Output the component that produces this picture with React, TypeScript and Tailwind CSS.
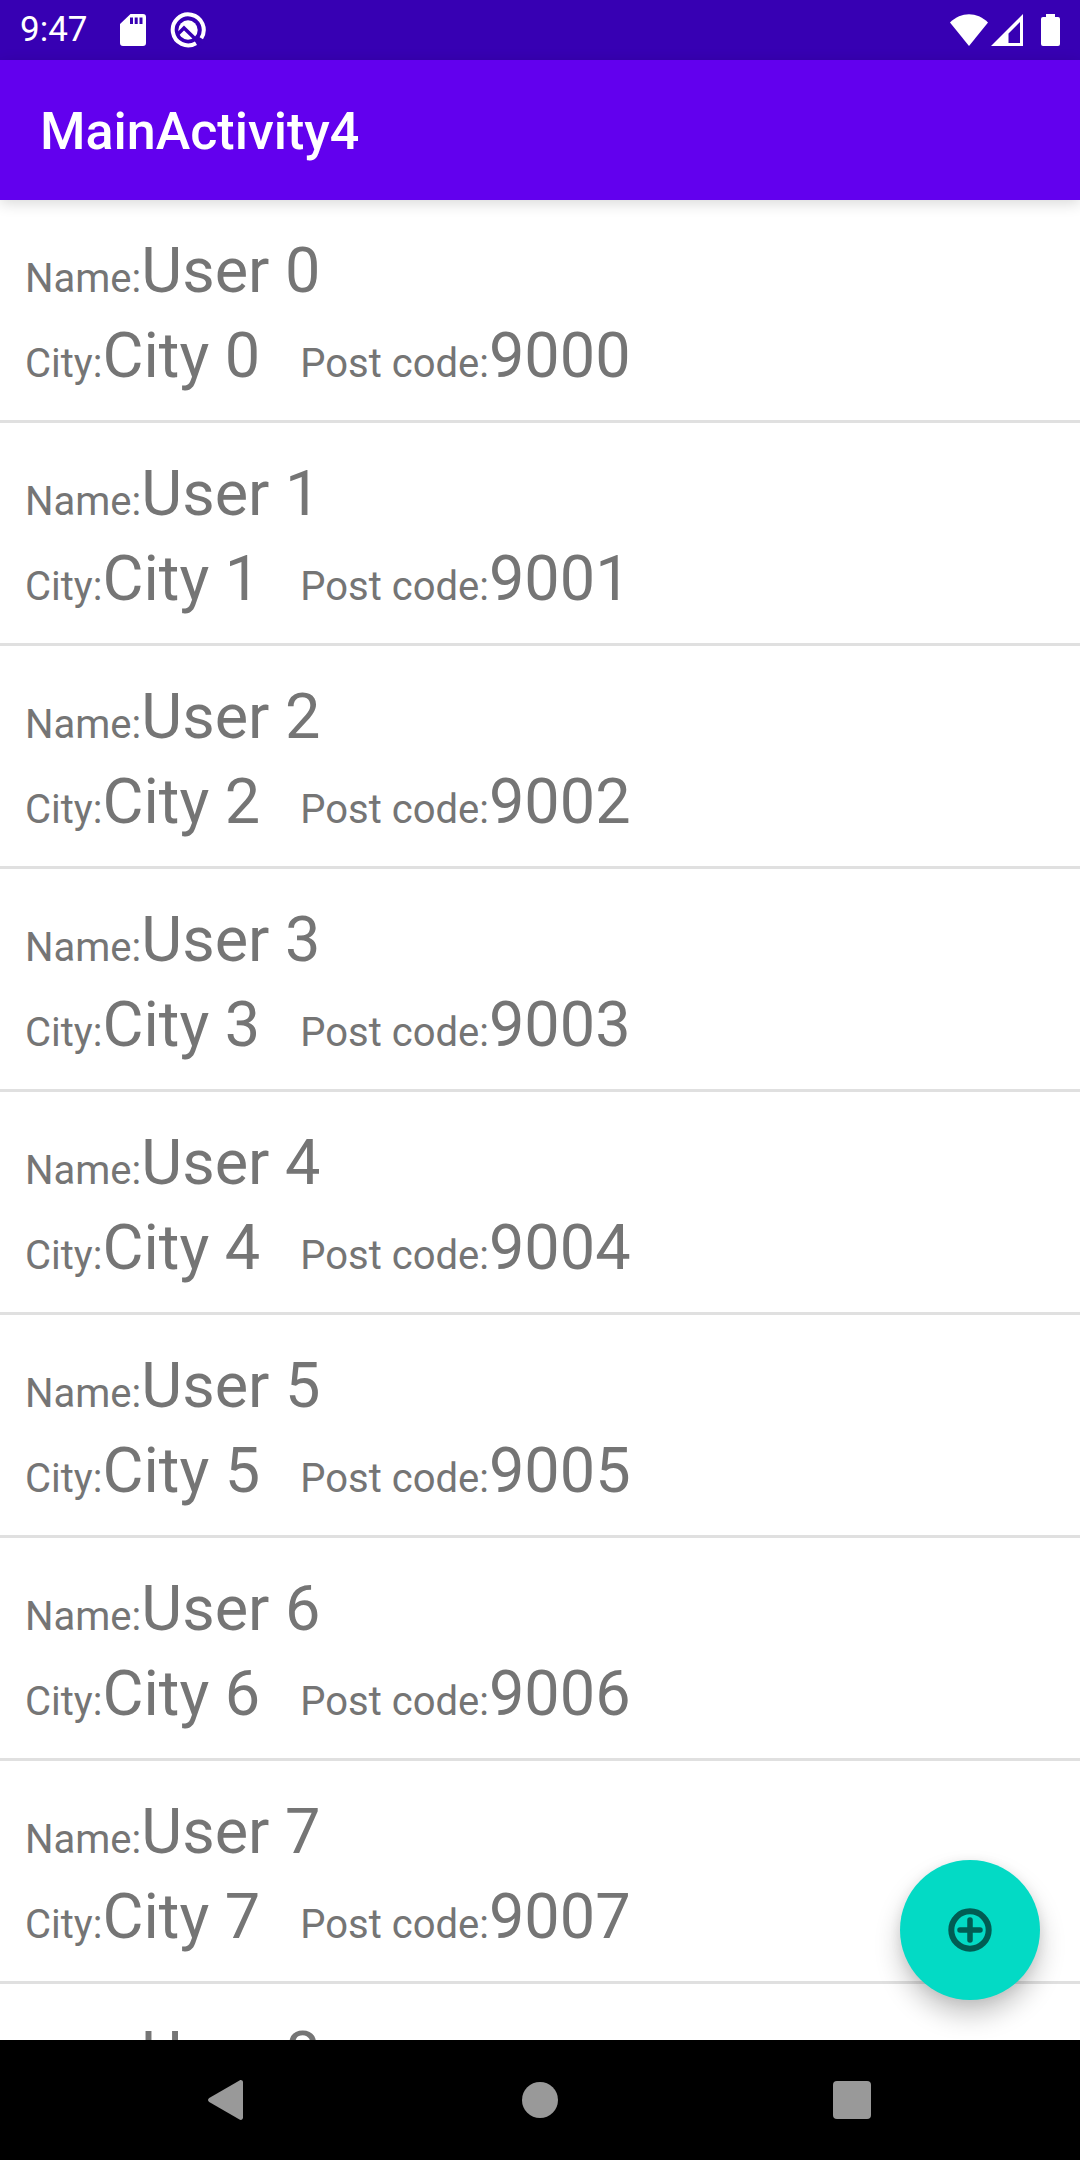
const users = Array.from({ length: 9 }, (_, i) => ({
  name: `User ${i}`,
  city: `City ${i}`,
  postCode: String(9000 + i),
}));

function StatusBar() {
  return (
    <div className="flex h-15 shrink-0 items-center justify-between bg-[#3700b3] pr-5 pl-5 text-white">
      <div className="flex items-center">
        <time className="text-[35px] leading-10">9:47</time>
        <svg className="ml-8 h-8 w-[26px]" viewBox="0 0 26 32" fill="currentColor" aria-label="SD card" role="img">
          <path
            fillRule="evenodd"
            d="M10.500 0H23a3 3 0 0 1 3 3v26a3 3 0 0 1-3 3H3a3 3 0 0 1-3-3V10zM10 3.500v6.500h3v-6.500zM14.700 3.500v6.500h3v-6.500zM19.500 3.500v6.500h3v-6.500z"
          />
        </svg>
        <svg className="ml-6 h-9 w-9" viewBox="0 0 36 36" fill="none" aria-label="System notification" role="img">
          <path d="M31.300 26.200A15.500 15.500 0 1 0 26 31.300" stroke="currentColor" strokeWidth="4" />
          <circle cx="18" cy="18" r="9.700" fill="currentColor" />
          <path d="M7.500 22.500l6.500-6.500L31 32.500" stroke="#3700b3" strokeWidth="3.400" />
        </svg>
      </div>
      <div className="flex items-center">
        <svg className="h-8 w-[38px]" viewBox="0 0 38 32" fill="currentColor" aria-label="Wi-Fi" role="img">
          <path d="M0 8.500C11 -2.500 27 -2.500 38 8.500L19 32z" />
        </svg>
        <svg className="ml-[3px] h-8 w-8" viewBox="0 0 32 32" fill="currentColor" aria-label="Mobile signal" role="img">
          <path fillRule="evenodd" d="M32 0v32H0zM29 8L17.500 19.500V29H29z" />
        </svg>
        <svg className="ml-[18px] h-8 w-[19px]" viewBox="0 0 19 32" fill="currentColor" aria-label="Battery" role="img">
          <path d="M5 0h9v3h3a2 2 0 0 1 2 2v25a2 2 0 0 1-2 2H2a2 2 0 0 1-2-2V5a2 2 0 0 1 2-2h3z" />
        </svg>
      </div>
    </div>
  );
}

function Field({ label, value }: { label: string; value: string }) {
  return (
    <span className="flex items-baseline whitespace-nowrap">
      <span className="text-[40px]">{label}:</span>
      <span className="text-[63px] leading-[85px]">{value}</span>
    </span>
  );
}

function NavigationBar() {
  return (
    <nav className="grid h-30 shrink-0 grid-cols-3 bg-black px-18 text-[#999999]">
      <button type="button" aria-label="Back" className="flex items-center justify-center">
        <svg className="h-10 w-10" viewBox="0 0 40 40" fill="currentColor">
          <path d="M1.200 18L31.500 .4C33 -.4 35 .4 35 2.500v35c0 2.100-2 2.900-3.500 2.100L1.200 22c-1.600-1-1.600-3 0-4z" />
        </svg>
      </button>
      <button type="button" aria-label="Home" className="flex items-center justify-center">
        <span className="size-9 rounded-full bg-current" />
      </button>
      <button type="button" aria-label="Overview" className="flex items-center justify-center">
        <span className="size-[38px] rounded bg-current" />
      </button>
    </nav>
  );
}

export default function App() {
  return (
    <div className="flex h-screen flex-col bg-white font-['Roboto',sans-serif]">
      <StatusBar />
      <header className="z-10 flex h-35 shrink-0 items-center bg-[#6200ee] px-10 shadow-[0_3px_14px_rgba(0,0,0,0.16)]">
        <h1 className="pt-1 text-[52px] leading-15 font-medium text-white">MainActivity4</h1>
      </header>
      <main className="relative min-h-0 flex-1">
        <ul className="h-full overflow-y-auto text-[#757575] [scrollbar-width:none]">
          {users.map((user) => (
            <li key={user.name} className="border-b-3 border-[#e0e0e0] px-[25px] pt-7 pb-[22px]">
              <Field label="Name" value={user.name} />
              <div className="flex gap-10">
                <Field label="City" value={user.city} />
                <Field label="Post code" value={user.postCode} />
              </div>
            </li>
          ))}
        </ul>
        <button
          type="button"
          aria-label="Add user"
          className="absolute right-10 bottom-10 flex size-35 items-center justify-center rounded-full bg-[#03dac5] text-[#015c53] shadow-[0_15px_26px_rgba(0,0,0,0.22),0_2px_12px_rgba(0,0,0,0.08)]"
        >
          <svg className="size-11" viewBox="0 0 44 44" fill="none" stroke="currentColor" strokeWidth="6">
            <circle cx="22" cy="22" r="18.700" />
            <path d="M22 12v20M12 22h20" strokeLinecap="round" strokeWidth="5.500" />
          </svg>
        </button>
      </main>
      <NavigationBar />
    </div>
  );
}
